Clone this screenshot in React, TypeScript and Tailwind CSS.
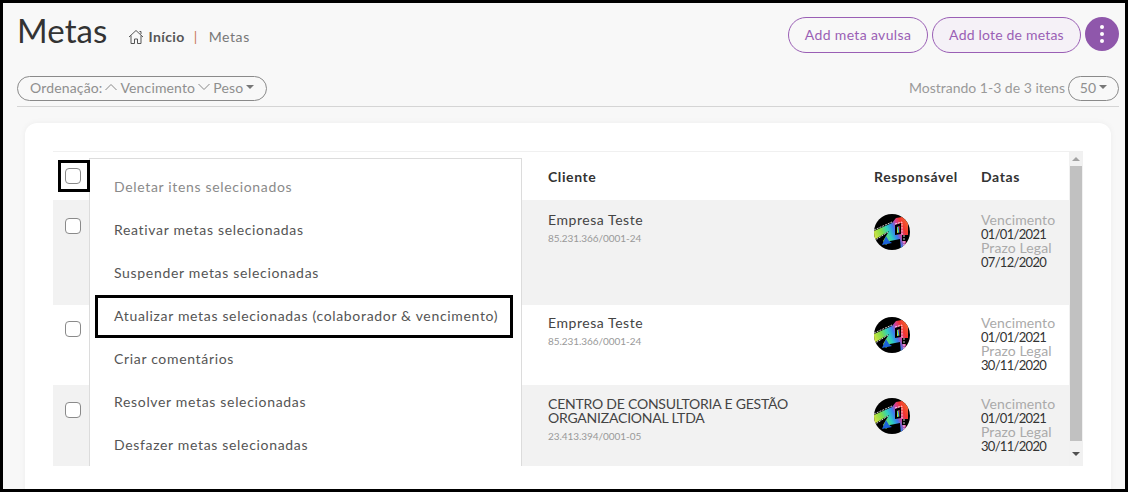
import React from "react";

const font = { fontFamily: '"Lato", "Open Sans", sans-serif' };

function Avatar({ id }: { id: string }) {
  return (
    <svg width="36" height="36" viewBox="0 0 36 36" className="block shrink-0">
      <defs>
        <linearGradient id={id} x1="0" y1="0.7" x2="1" y2="0.25">
          <stop offset="0" stopColor="#e9e640" />
          <stop offset="0.28" stopColor="#7ddc4a" />
          <stop offset="0.45" stopColor="#2fd0c0" />
          <stop offset="0.6" stopColor="#3a7df0" />
          <stop offset="0.72" stopColor="#d0409a" />
          <stop offset="0.85" stopColor="#f2352f" />
          <stop offset="1" stopColor="#f2602f" />
        </linearGradient>
        <clipPath id={id + "c"}>
          <circle cx="18" cy="18" r="18" />
        </clipPath>
      </defs>
      <circle cx="18" cy="18" r="18" fill="#000" />
      <g clipPath={`url(#${id}c)`}>
        <path d="M0 17 L18 9 L22 4 L34 2 L34 21 L28 21 L28 27 L32 27 L31 36 L27 36 L26 25 L16 27 L12 31 L9 27 L15 17 L0 26 Z" fill={`url(#${id})`} />
        <path d="M21 11 L27 9 L27 20 L21 21 Z" fill="#000" />
        <path d="M23 13 L25.5 12 L25.5 18.5 L23 19 Z" fill={`url(#${id})`} />
        <path d="M12 22 L8 31 L18 29 L15 27 Z" fill="#1c63d8" />
        <path d="M0 16 L18 8 M21 10 L28 8 V21 M0 27 L14 18 M30 21 V36" stroke="#fff" strokeWidth="0.8" fill="none" strokeDasharray="2 1" />
      </g>
    </svg>
  );
}

function Box() {
  return <div className="size-4 rounded-[4px] border border-[#8a8a8a] bg-white" />;
}

function Caret() {
  return <span className="ml-[3px] inline-block h-0 w-0 border-x-[4px] border-t-[4px] border-x-transparent border-t-[#777] align-[2px]" />;
}

function Row({ bg, name, doc, d2, id, caps }: { bg: string; name: string[]; doc: string; d2: string; id: string; caps?: boolean }) {
  return (
    <div className={`flex ${bg}`}>
      <div className="w-[495px] shrink-0 pl-3 pt-[16px]">
        <Box />
      </div>
      <div className="w-[326px] shrink-0 pt-[11px]">
        {name.map((n) => (
          <div key={n} className={`text-[14px] leading-[14px] text-[#444] ${caps ? "tracking-[-0.22px]" : "tracking-[0.55px]"}`}>{n}</div>
        ))}
        <div className="mt-[5px] text-[10px] leading-[12px] tracking-[-0.05px] text-[#999]">{doc}</div>
      </div>
      <div className="w-[107px] shrink-0 pt-[12px]">
        <Avatar id={id} />
      </div>
      <div className="pt-[11px] text-[14px] leading-[14px]">
        <div className="tracking-[0.1px] text-[#aaa]">Vencimento</div>
        <div className="text-[13px] tracking-[-0.7px] text-[#333]">01/01/2021</div>
        <div className="tracking-[0.1px] text-[#aaa]">Prazo Legal</div>
        <div className="text-[13px] tracking-[-0.7px] text-[#333]">{d2}</div>
      </div>
    </div>
  );
}

const menu = [
  "Deletar itens selecionados",
  "Reativar metas selecionadas",
  "Suspender metas selecionadas",
  "Atualizar metas selecionadas (colaborador & vencimento)",
  "Criar comentários",
  "Resolver metas selecionadas",
  "Desfazer metas selecionadas",
];

export default function App() {
  return (
    <div style={font} className="h-[492px] w-[1128px] overflow-hidden border-[3px] border-black bg-[#f8f8f8] pl-[14px] pr-[6px] pt-[14px]">
      <div className="flex h-[36px] items-start justify-between">
        <div className="flex items-start">
          <div className="text-[33px] leading-[27px] tracking-[0.1px] text-[#333]">Metas</div>
          <div className="ml-[21px] mt-[12px] flex items-center text-[14px] leading-[16px] tracking-[0.4px]">
            <svg width="16" height="16" viewBox="0 0 16 16" fill="none" stroke="#555" strokeWidth="1" className="mr-[4px]">
              <path d="M1 8 L8 1.5 L15 8 M3 6.5 V14.5 H6.5 V10 H9.5 V14.5 H13 V6.5 M11.5 2.5 H13 V5" />
            </svg>
            <span className="font-bold text-[#555]">Início</span>
            <span className="ml-[9px] text-[#c9785a]">|</span>
            <span className="ml-[11px] tracking-[0.6px] text-[#777]">Metas</span>
          </div>
        </div>
        <div className="flex items-start gap-1">
          <div className="flex h-[36px] w-[140px] items-center justify-center rounded-full border border-[#9a5fb5] pb-[2px] text-[14px] tracking-[0.35px] text-[#9a5fb5]">Add meta avulsa</div>
          <div className="flex h-[36px] w-[149px] items-center justify-center rounded-full border border-[#9a5fb5] bg-[#f5f1f7] pb-[2px] text-[14px] tracking-[0.2px] text-[#9a5fb5]">Add lote de metas</div>
          <div className="flex size-[34px] flex-col items-center justify-center gap-[3px] rounded-full bg-[#8f57ab]">
            <span className="size-[4px] rounded-full bg-white" />
            <span className="size-[4px] rounded-full bg-white" />
            <span className="size-[4px] rounded-full bg-white" />
          </div>
        </div>
      </div>

      <div className="mt-[23px] flex h-[31px] items-start justify-between border-b border-[#d5d5d5] text-[14px] tracking-[0.15px] text-[#9a9a9a]">
        <div className="flex h-[25px] w-[250px] items-center rounded-full border border-[#8a8a8a] pb-[3px] pl-[12px] text-[#8f8f8f]">
          <span>Ordenação:</span>
          <svg width="14" height="8" viewBox="0 0 14 8" fill="none" stroke="#888" className="mx-[2px]"><path d="M1.5 7 L7 1.5 L12.5 7" /></svg>
          <span>Vencimento</span>
          <svg width="14" height="8" viewBox="0 0 14 8" fill="none" stroke="#888" className="mx-[2px]"><path d="M1.5 1 L7 6.5 L12.5 1" /></svg>
          <span>Peso</span>
          <Caret />
        </div>
        <div className="flex items-center">
          <span className="mr-[3px] pb-[3px] tracking-[0px]">Mostrando 1-3 de 3 itens</span>
          <div className="flex h-[25px] w-[51px] items-center justify-center rounded-full border border-[#8a8a8a] pb-[3px] text-[#8f8f8f]">
            50<Caret />
          </div>
        </div>
      </div>

      <div className="mx-2 mt-4 h-[400px] rounded-t-[12px] bg-white px-7 pt-7 shadow-[0_0_6px_rgba(0,0,0,0.05)]">
        <div className="relative flex h-[315px] border-t border-[#f0f0f0]">
          <div className="min-w-0 flex-1">
            <div className="flex h-[48px] bg-white text-[14px] font-bold tracking-[0.6px] text-[#333]">
              <div className="w-[495px] shrink-0 pl-3 pt-[16px]"><Box /></div>
              <div className="w-[326px] shrink-0 pt-[14px]">Cliente</div>
              <div className="w-[107px] shrink-0 pt-[14px]">Responsável</div>
              <div className="pt-[14px]">Datas</div>
            </div>
            <div className="h-[105px] bg-[#f2f2f2] pt-[2px]">
              <Row bg="bg-[#f2f2f2]" name={["Empresa Teste"]} doc="85.231.366/0001-24" d2="07/12/2020" id="a1" />
            </div>
            <div className="h-[80px] bg-white">
              <Row bg="bg-white" name={["Empresa Teste"]} doc="85.231.366/0001-24" d2="30/11/2020" id="a2" />
            </div>
            <div className="h-[81px] bg-[#f2f2f2] pt-[1px]">
              <Row bg="bg-[#f2f2f2]" caps name={["CENTRO DE CONSULTORIA E GESTÃO", "ORGANIZACIONAL LTDA"]} doc="23.413.394/0001-05" d2="30/11/2020" id="a3" />
            </div>
          </div>
          <div className="flex h-[314px] w-[14px] shrink-0 flex-col items-center bg-[#f1f1f1]">
            <div className="flex h-[14px] w-full items-center justify-center">
              <span className="h-0 w-0 border-x-[4px] border-b-[4px] border-x-transparent border-b-[#a3a3a3]" />
            </div>
            <div className="h-[275px] w-[12px] bg-[#c1c1c1]" />
            <div className="flex w-full flex-1 items-center justify-center">
              <span className="h-0 w-0 border-x-[4px] border-t-[4px] border-x-transparent border-t-[#505050]" />
            </div>
          </div>

          <div className="absolute left-[36px] top-[6px] h-[308px] w-[433px] border-x border-t border-[#dcdcdc] bg-white pt-[6px] text-[14px] tracking-[0.67px] text-[#555]">
            {menu.map((m, i) => (
              <div key={m} className={`flex h-[43px] items-center pl-[24px] ${i === 0 ? "text-[#8a8a8a]" : ""}`}>{m}</div>
            ))}
          </div>
          <div className="pointer-events-none absolute left-[5px] top-[8px] h-[32px] w-[32px] border-[3px] border-black" />
          <div className="pointer-events-none absolute left-[42px] top-[143px] h-[43px] w-[418px] border-[3px] border-black" />
        </div>
      </div>
    </div>
  );
}
